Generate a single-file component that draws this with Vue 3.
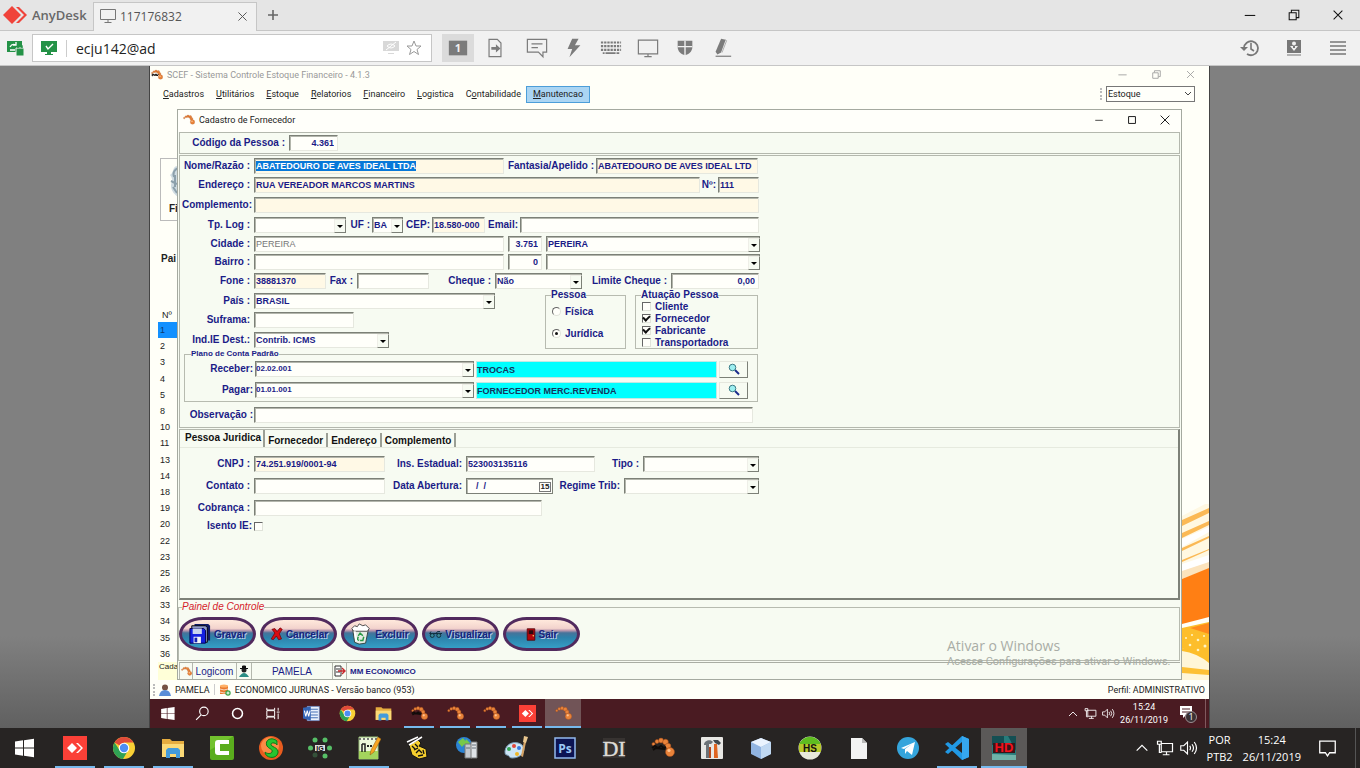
<script setup>
import { onMounted } from 'vue'

onMounted(() => {
  const el = document.getElementById('nome')
  if (el) {
    el.focus()
    el.select()
  }
})

const toolIcons = [
  { name: 'Monitor 1', cls: 'on', svg: '<rect x="2" y="4" width="20" height="16" fill="#7b7b7b"/><text x="12" y="16.500" font-size="12" font-weight="bold" text-anchor="middle" fill="#f0f0f0" font-family="Open Sans">1</text>' },
  { name: 'Transferir arquivo', cls: 't2', svg: '<path d="M5.500 2.500h9l4 4v15h-13z" fill="none" stroke="#7b7b7b" stroke-width="1.300"/><path d="M8 11h5V8l5 4.500-5 4.500v-3H8z" fill="#7b7b7b"/>' },
  { name: 'Chat', cls: 't3', svg: '<path d="M1.500 2.500h21v14h-4v5l-5-5h-12z" fill="none" stroke="#7b7b7b" stroke-width="1.300"/><path d="M6 7.500h12M6 11.500h7" stroke="#7b7b7b" stroke-width="1.400"/>' },
  { name: 'Ações', cls: 't4', svg: '<path d="M10 2h7l-4 7h6L7 22l3-9H5z" fill="#7b7b7b"/>' },
  { name: 'Teclado', cls: 't5', svg: '<path d="M1 6h22M1 10h22M1 14h22" stroke="#7b7b7b" stroke-width="2.400" stroke-dasharray="2.500 1"/><path d="M3 17.500h2M6 17.500h11M18 17.500h3" stroke="#7b7b7b" stroke-width="2"/>' },
  { name: 'Tela', cls: 't6', svg: '<path d="M1.500 3.500h21v15h-21zM12 19v3M8 21.500h8" fill="none" stroke="#7b7b7b" stroke-width="1.300"/>' },
  { name: 'Permissões', cls: 't7', svg: '<path d="M4 4h16v7c0 5-4 8-8 9-4-1-8-4-8-9z" fill="#7b7b7b"/><path d="M12 4v17M4 10.500h16" stroke="#f1f1f1" stroke-width="1.500"/>' },
  { name: 'Desenhar', cls: 't8', svg: '<path d="M11 2l5 1-5 14-4 2-2-3z" fill="#7b7b7b"/><path d="M15 3l2 1-5 13" stroke="#aaa" fill="none"/><path d="M5 21h17" stroke="#7b7b7b" stroke-width="1.300"/>' },
]

const menus = [
  ['', 'C', 'adastros'], ['', 'U', 'tilitários'], ['', 'E', 'stoque'], ['', 'R', 'elatorios'],
  ['', 'F', 'inanceiro'], ['', 'L', 'ogistica'], ['C', 'o', 'ntabilidade'], ['', 'M', 'anutencao'],
]

const numbers = [1, 2, 3, 4, 5, 8, 10, 11, 13, 14, 18, 19, 20, 22, 23, 25, 26, 33, 34, 35, 36]

const f = (id, label, value = '', cls = '') => ({ id, label, value, cls, kind: 'input' })
const s = (id, label, value = '', cls = '') => ({ id, label, value, cls, kind: 'select' })

const topRows = [
  { cls: 'r-nome', cells: [f('nome', 'Nome/Razão :', 'ABATEDOURO DE AVES IDEAL LTDA', 'cream'), f('fantasia', 'Fantasia/Apelido :', 'ABATEDOURO DE AVES IDEAL LTD', 'cream')] },
  { cls: 'r-endereco', cells: [f('endereco', 'Endereço :', 'RUA VEREADOR MARCOS MARTINS', 'cream'), f('numero', 'Nº:', '111', 'cream')] },
  { cls: 'r-complemento', cells: [f('complemento', 'Complemento:', '', 'cream')] },
  { cls: 'r-log', cells: [s('log', 'Tp. Log :'), s('uf', 'UF :', 'BA'), f('cep', 'CEP:', '18.580-000', 'cream'), f('email', 'Email:')] },
  { cls: 'r-cidade', cells: [f('cidade', 'Cidade :', 'PEREIRA', 'dim'), f('cidadecod', '', '3.751', 'num'), s('cidadesel', '', 'PEREIRA')] },
  { cls: 'r-cidade', cells: [f('bairro', 'Bairro :'), f('bairrocod', '', '0', 'num'), s('bairrosel', '')] },
  { cls: 'r-fone', cells: [f('fone', 'Fone :', '38881370', 'cream'), f('fax', 'Fax :'), s('cheque', 'Cheque :', 'Não'), f('limite', 'Limite Cheque :', '0,00', 'num')] },
]
const midRows = [
  { cls: 'r-pais', cells: [s('pais', 'País :', 'BRASIL')] },
  { cls: 'r-suframa', cells: [f('suframa', 'Suframa:')] },
  { cls: 'r-ind', cells: [s('indie', 'Ind.IE Dest.:', 'Contrib. ICMS')] },
]
const tabRows = [
  { cls: 'r-cnpj', cells: [f('cnpj', 'CNPJ :', '74.251.919/0001-94', 'cream'), f('ie', 'Ins. Estadual:', '523003135116'), s('tipo', 'Tipo :')] },
  { cls: 'r-contato', cells: [f('contato', 'Contato :'), { id: 'abertura', label: 'Data Abertura:', value: '  /  /', kind: 'date', cls: '' }, s('regime', 'Regime Trib:')] },
  { cls: 'r-cobranca', cells: [f('cobranca', 'Cobrança :')] },
]
const plano = [
  { id: 'receber', label: 'Receber:', code: '02.02.001', name: 'TROCAS' },
  { id: 'pagar', label: 'Pagar:', code: '01.01.001', name: 'FORNECEDOR MERC.REVENDA' },
]
const atuacao = [
  ['Cliente', false], ['Fornecedor', true], ['Fabricante', true], ['Transportadora', false],
]
const tabs = ['Pessoa Juridica', 'Fornecedor', 'Endereço', 'Complemento']

const actions = [
  { name: 'Gravar', w: 22, h: 22, box: '0 0 24 24', svg: '<path d="M6 1h15l2 2v16H6z" fill="#111a66"/><path d="M3 3h15l2 2v16H3z" fill="#8f9ac9" stroke="#000"/><path d="M1 6h15l2 2v14H1z" fill="#1420e0" stroke="#00004d"/><path d="M4 6h10v6H4z" fill="#c8d4ee"/><path d="M5 15h8v7H5z" fill="#f4f6fa"/><path d="M6 16h3v5H6z" fill="#1420b0"/>' },
  { name: 'Cancelar', w: 14, h: 15, box: '2 3 19 20', svg: '<path d="M6 6l4-1 3 4 4-5 3 2-4 6 3 7-4 1-3-5-4 5-3-1 5-8z" fill="#d90d12" stroke="#6d0208"/>' },
  { name: 'Excluir', w: 22, h: 22, box: '0 0 24 24', svg: '<path d="M3 7h17l-3 15-7 1-5-2z" fill="#e5ebe4" stroke="#30403a"/><path d="M2 6l3-3 3 1 2-3 4 2 3-1 4 4-2 3H4z" fill="#fff" stroke="#444"/><path d="M9 14l2-3 3 3M15 15l-1 4h-3M9 15l-1 3 2 1" fill="none" stroke="#269a44" stroke-width="1.600"/><path d="M5 9l2 11" stroke="#fff" stroke-width="2"/>' },
  { name: 'Visualizar', w: 13, h: 9, box: '2 7 20 13', svg: '<path d="M3 12h19M3 12l2-3M13 12l2-3h4" stroke="#0e2c3c" stroke-width="1.500" fill="none"/><circle cx="7" cy="15" r="3" fill="#3d8a98" stroke="#0e2c3c" stroke-width="1.500"/><circle cx="17" cy="15" r="3" fill="#3d8a98" stroke="#0e2c3c" stroke-width="1.500"/>' },
  { name: 'Sair', w: 10, h: 13, box: '7 4 12 17', svg: '<path d="M8 5h10v15H8z" fill="#b3070d" stroke="#4d0008"/><path d="M10 7h6v5h-6z" fill="#2d0a10"/><circle cx="16" cy="14" r="1" fill="#ffe060"/>' },
]

const flag = '<path d="M3 5.500l8-1.200v7.200H3zM12 4.200l10-1.400v8.700H12zM3 12.500h8v7.200l-8-1.200zM12 12.500h10v8.700l-10-1.400z" fill="#fff"/>'
const chrome = '<circle cx="12" cy="12" r="11" fill="#f9d035"/><path d="M12 12L2.500 6.500A11 11 0 0 1 21.500 6.500H12z" fill="#df4a3a"/><path d="M2.500 6.500A11 11 0 0 0 11 23l5-8.500-4-2.500-4.500 2z" fill="#2fa254"/><circle cx="12" cy="12" r="5.300" fill="#fff"/><circle cx="12" cy="12" r="4.200" fill="#4d8df4"/>'
const folder = '<path d="M1 3h8l2 2h12v16H1z" fill="#e5ac3f"/><path d="M1 8h22v13H1z" fill="#fbd976"/><path d="M5 22v-8l2-2h10l2 2v8h-4v-4H9v4z" fill="#439bdb"/>'
const anydesk = '<path d="M0 0h24v24H0z" fill="#fb4037"/><path d="M9 7l5 5-5 5-5-5zM13 7h2l5 5-5 5h-2l5-5z" fill="#fff"/>'
const worm = '<g fill="#e9833a" stroke="#a44b18" stroke-width=".5"><circle cx="2.500" cy="8" r="1.600"/><circle cx="6" cy="5.500" r="2"/><circle cx="10" cy="4.500" r="2.400"/><circle cx="14.500" cy="6" r="2.800"/><circle cx="17" cy="10" r="2.800"/><circle cx="19" cy="16" r="4.500"/></g><circle cx="18" cy="14.500" r="1.600" fill="#ffc491"/>'
const antworm = worm + '<path d="M1 12l3-2 3 2 3-2 3 2 2-1M2 14l3-2 9 1" stroke="#100c0a" stroke-width="2" fill="none"/>'

const apps = [
  { name: 'Iniciar', cls: 'start', svg: flag },
  { name: 'AnyDesk', cls: 'run', svg: anydesk },
  { name: 'Chrome', cls: 'run', svg: chrome },
  { name: 'Explorador de Arquivos', cls: 'run', svg: folder },
  { name: 'Camtasia', svg: '<rect width="24" height="24" rx="2" fill="#5aad1d"/><path d="M0 0h24L0 14z" fill="#72c22e"/><path d="M19 4H8Q5 4 5 7v9q0 3 3 3h11v-4H10V8h9z" fill="#fff"/>' },
  { name: 'Sistema', svg: '<circle cx="12" cy="12" r="12" fill="#e85c1e"/><circle cx="11" cy="10" r="9" fill="#fb8b45"/><path d="M18 5c-5-5-13-1-10 5 2 3 6 3 5 6-1 2-5 2-7 0 0 6 11 8 13 1 1-6-8-6-7-9 1-2 5-1 6 1z" fill="#27c52f" stroke="#0c7718"/>' },
  { name: 'Rede', svg: '<path d="M7 12h10" stroke="#ddd" stroke-width="6"/><text x="12" y="14.500" text-anchor="middle" font-size="7" font-weight="bold" font-family="Liberation Sans" fill="#111">IG</text><g fill="#56bf67"><circle cx="7" cy="4" r="2.500"/><circle cx="17" cy="4" r="2.500"/><circle cx="2.500" cy="12" r="2.500"/><circle cx="21.500" cy="12" r="2.500"/><circle cx="7" cy="19" r="2.500" fill="#35513a"/><circle cx="17" cy="20" r="2.500"/></g>' },
  { name: 'Notepad++', cls: 'run', svg: '<path d="M2 1h19v22H2z" fill="#edf8dc" stroke="#98bd79"/><path d="M2 15h19v8H2z" fill="#a3d45d"/><path d="M2 3h19" stroke="#777" stroke-width="2" stroke-dasharray="2 2"/><path d="M5 8h3v8M5 8v8" stroke="#222" stroke-width="1.500" fill="none"/><path d="M10 10h2M13 10h2" stroke="#222" stroke-width="2"/><path d="M21 1l3 2-7 13-4 3 1-5z" fill="#f8a521" stroke="#8b5813" stroke-width=".5"/>' },
  { name: 'Ferramenta', svg: '<path d="M3 9l9-5 3 3-2 3 7 3 1 8-8 2-7-4z" fill="#f6cf2e" stroke="#111"/><path d="M1 6l11-5M3 9l13-8" stroke="#fff" stroke-width="1.500"/><path d="M6 10l3 3M9 8l3 3M8 14l4-2M10 17l3-3 3 3M12 20l5-1M17 14l1 4" stroke="#111" stroke-width="1.300" fill="none"/>' },
  { name: 'Servidor', svg: '<circle cx="9" cy="9" r="8" fill="#2b83d4"/><path d="M3 6l5-4 3 4-4 5zM11 3l4 4-2 5-4-3z" fill="#77c949"/><path d="M10 8h7v14h-7z" fill="#c4c9cf" stroke="#777"/><path d="M16 6h6v16h-6z" fill="#dfe3e7" stroke="#777"/><path d="M17 9h4M17 12h4M11 12h4" stroke="#66717a"/>' },
  { name: 'Paint', svg: '<path d="M1 15C2 7 12 4 18 9c5 6-1 13-10 13-3 0-3-3-5-3-2 0-2-2-2-4z" fill="#cde5f5" stroke="#7a9eb8"/><circle cx="5" cy="13" r="2" fill="#32a452"/><circle cx="10" cy="10" r="2" fill="#df473b"/><circle cx="15" cy="12" r="2" fill="#3679dc"/><circle cx="13" cy="18" r="2" fill="#efb727"/><path d="M20 5l2 1-3 15-2-1z" fill="#d6a467"/><path d="M20 0l4 1-2 6-3-1z" fill="#e8c68e"/>' },
  { name: 'Photoshop', svg: '<rect x="2" y="2" width="20" height="20" fill="#0c1453" stroke="#92b9ee" stroke-width="1.500"/><text x="12" y="16.500" text-anchor="middle" font-size="12" font-weight="bold" font-family="Open Sans" fill="#9cc8f7">Ps</text>' },
  { name: 'DI', svg: '<path d="M1 2h22v20H1z" fill="#373331"/><text x="12" y="20" text-anchor="middle" font-size="22" font-family="Liberation Serif" fill="#dedcd8" stroke="#dedcd8" stroke-width=".4">DI</text>' },
  { name: 'Logicom', svg: antworm },
  { name: 'Utilitários', svg: '<rect x="1" y="1" width="22" height="22" rx="1" fill="#e8e7e4"/><path d="M4 9c0-5 7-6 9-3l-2 2H9v14H6V9z" fill="#6c7277"/><path d="M13 4h5l3 3-2 2-4-2z" fill="#40484d"/><path d="M14 8h3l1 14h-4z" fill="#df6420"/><path d="M9 11h2v11H9z" fill="#b6481d"/>' },
  { name: 'VirtualBox', svg: '<path d="M12 2l10 4v12l-10 5L2 18V6z" fill="#91b4e1"/><path d="M12 2l10 4-10 5L2 6z" fill="#eaf3fe"/><path d="M12 11l10-5v12l-10 5z" fill="#c0d8f2"/>' },
  { name: 'HeidiSQL', svg: '<circle cx="12" cy="12" r="11.500" fill="#e8e9dc"/><path d="M1 9a11.500 11.500 0 0 1 22 0z" fill="#5fbd20"/><path d="M1 8h22v8H1z" fill="#b7c92c"/><text x="12" y="16" text-anchor="middle" font-size="10" font-weight="bold" font-family="Liberation Sans" fill="#111">HS</text>' },
  { name: 'Documento', svg: '<path d="M4 2h11l5 5v16H4z" fill="#f3f3f3"/><path d="M15 2l5 5h-5z" fill="#b9b9b9"/>' },
  { name: 'Telegram', svg: '<circle cx="12" cy="12" r="11" fill="#35a5dc"/><path d="M5 12l14-6-3 13-5-4-2 3v-5l7-5-8 5z" fill="#fff"/>' },
  { name: 'VS Code', cls: 'run', svg: '<path d="M17 0l7 3v18l-7 3L0 8l3-2 14 11V6L3 18l-3-2z" fill="#2199e5"/><path d="M17 0l7 3v18l-7 3z" fill="#36a8f0"/>' },
  { name: 'HD', cls: 'run current', svg: '<path d="M0 0h24v24H0z" fill="#277b7a"/><path d="M0 0h12v9H0zM16 0h8v15z" fill="#144f53"/><path d="M0 24V18l24 1v5z" fill="#6fb3a9"/><path d="M1 7h22v10H1z" fill="#3b1418"/><text x="12" y="16" text-anchor="middle" font-size="13" font-weight="bold" font-family="Liberation Sans" fill="#f3121c">HD</text>' },
]

const remoteApps = [
  { name: 'Iniciar', svg: flag },
  { name: 'Pesquisar', svg: '<circle cx="14" cy="9" r="6" fill="none" stroke="#fff" stroke-width="1.600"/><path d="M10 14l-7 7" stroke="#fff" stroke-width="1.600"/>' },
  { name: 'Cortana', svg: '<circle cx="12" cy="12" r="7" fill="none" stroke="#fff" stroke-width="2.200"/>' },
  { name: 'Visão de tarefas', svg: '<path d="M4 4v3h11V4M4 20v-3h11v3M4 8h11v8H4zM20 4v4M20 12v8M18 10h4" fill="none" stroke="#fff" stroke-width="1.400"/>' },
  { name: 'Word', cls: 'word', svg: '<path d="M6 2h17v20H6z" fill="#e9f1fd" stroke="#6b8fce"/><path d="M10 6h11M10 10h11M10 14h11M10 18h11" stroke="#4670b5" stroke-width="1.500"/><path d="M0 4l11-2v20L0 19z" fill="#3565b6"/><path d="M2 8l2 8 2-8 2 8 2-8" stroke="#fff" stroke-width="1.500" fill="none"/>' },
  { name: 'Chrome', svg: chrome },
  { name: 'Explorador', svg: folder },
  { name: 'SCEF', cls: 'run', svg: antworm },
  { name: 'SCEF 2', cls: 'run', svg: worm },
  { name: 'SCEF 3', cls: 'run', svg: worm },
  { name: 'AnyDesk', cls: 'run', svg: anydesk },
  { name: 'SCEF 4', cls: 'run current', svg: worm },
]

const netIcon = '<path d="M7 6h15v11H7zM14 17v4M9 21h9M2 3h5v4H2zM4.500 7v11h3" fill="none" stroke="#fff" stroke-width="1.600"/>'
const volIcon = '<path d="M1 9h4l5-5v16l-5-5H1z" fill="none" stroke="#fff" stroke-width="1.500"/><path d="M13 9q2 3 0 6M16 7q4 5 0 10M19 4q6 8 0 16" fill="none" stroke="#fff" stroke-width="1.600"/>'
const upIcon = '<path d="M4 16l8-8 8 8" fill="none" stroke="#fff" stroke-width="1.800"/>'
const minIcon = '<path d="M2 8.500h12" stroke="currentColor" stroke-width="1.200"/>'
const maxIcon = '<path d="M2.500 2.500h11v11h-11z" fill="none" stroke="currentColor" stroke-width="1.500"/>'
const restIcon = '<path d="M2.500 5.500h8v8h-8zM5 5V2.500h8.500V11H11" fill="none" stroke="currentColor" stroke-width="1.200"/>'
const closeIcon = '<path d="M3 3l10 10M13 3L3 13" stroke="currentColor" stroke-width="1.200"/>'
const closeBig = '<path d="M1 1l14 14M15 1L1 15" stroke="currentColor" stroke-width="1.500"/>'
const controls = [['Minimizar', minIcon], ['Restaurar', restIcon], ['Fechar', closeIcon]]
const controls2 = [['Minimizar', minIcon], ['Maximizar', maxIcon], ['Fechar', closeBig]]
</script>

<template>
  <div class="page">
    <header class="tabbar">
      <div class="brand">
        <svg viewBox="0 0 24 18" width="24" height="18"><path d="M9 0l9 9-9 9-9-9z" fill="#f0433a" /><path d="M13 1h3l8 8-8 8h-3l8-8z" fill="#f0433a" /></svg>
        <span>AnyDesk</span>
      </div>
      <div class="session">
        <svg viewBox="0 0 16 14" width="16" height="14"><path d="M.5 .5h15v10H.5zM8 11v2M4.500 13.500h7" fill="none" stroke="#777" /></svg>
        <span>117176832</span>
        <button aria-label="Fechar aba"><svg viewBox="0 0 16 16" width="13" height="13" v-html="closeIcon"></svg></button>
      </div>
      <button class="plus" aria-label="Nova aba"><svg viewBox="0 0 12 12" width="12" height="12"><path d="M6 1v10M1 6h10" stroke="#666" stroke-width="1.600" /></svg></button>
      <div class="winctl outer">
        <button v-for="c in controls" :key="c[0]" :aria-label="c[0]"><svg viewBox="0 0 16 16" width="14" height="14" v-html="c[1]"></svg></button>
      </div>
    </header>

    <div class="toolbar">
      <svg class="lock" viewBox="0 0 18 16" width="18" height="16"><path d="M0 1h15v11H0z" fill="#249247" /><path d="M3 7q2-4 6-2M9 2v3H6M3 10h5" stroke="#fff" fill="none" stroke-width="1.300" /><path d="M9 8h8v8H9z" fill="#249247" stroke="#f1f1f1" /><path d="M11 8V6q2-3 4 0v2" fill="none" stroke="#249247" stroke-width="1.500" /></svg>
      <div class="address">
        <svg viewBox="0 0 16 15" width="16" height="15"><path d="M0 0h16v11H0zM6 11h4v2h2v1H4v-1h2z" fill="#249247" /><path d="M5 5l2 3 5-5" fill="none" stroke="#fff" stroke-width="1.400" /></svg>
        <input type="text" value="ecju142@ad" aria-label="Endereço remoto" />
        <svg viewBox="0 0 16 14" width="16" height="14"><path d="M0 0h16v10H0zM5 12h6v1H5z" fill="#d8d8d8" /><path d="M3 9L13 1M4 5q4-4 8 0-4 4-8 0" stroke="#fff" fill="none" /></svg>
        <svg viewBox="0 0 16 16" width="16" height="16"><path d="M8 1l2 5h5l-4 3.500 1.500 5L8 11.500l-4.500 3 1.500-5L1 6h5z" fill="none" stroke="#999" /></svg>
      </div>
      <div class="tools">
        <button v-for="t in toolIcons" :key="t.name" :class="t.cls" :aria-label="t.name"><svg viewBox="0 0 24 24" width="22" height="22" v-html="t.svg"></svg></button>
      </div>
      <div class="tools right">
        <button aria-label="Histórico"><svg viewBox="0 0 20 18" width="20" height="18"><path d="M4 9a7 7 0 1 1 3 6" fill="none" stroke="#777" stroke-width="1.800" /><path d="M0 8h8l-4 4z" fill="#777" /><path d="M11 4v6l3 2" fill="none" stroke="#777" stroke-width="1.600" /></svg></button>
        <button aria-label="Instalar"><svg viewBox="0 0 16 18" width="16" height="18"><path d="M1 1h14v13H1zM1 15.500h14v1H1z" fill="#777" /><circle cx="8" cy="4.500" r="2" fill="#f1f1f1" /><path d="M4 7h3v2h2V7h3l-4 5z" fill="#f1f1f1" /></svg></button>
        <button aria-label="Menu"><svg viewBox="0 0 16 16" width="16" height="16"><path d="M0 2h16M0 6h16M0 10h16M0 14h16" stroke="#777" stroke-width="1.700" /></svg></button>
      </div>
    </div>

    <main class="stage">
      <div class="remote">
        <div class="apptitle">
          <svg viewBox="0 0 24 24" width="12" height="12" v-html="antworm"></svg>
          <span>SCEF - Sistema Controle Estoque Financeiro - 4.1.3</span>
          <div class="winctl small">
            <button v-for="c in controls" :key="c[0]" :aria-label="c[0]"><svg viewBox="0 0 16 16" width="11" height="11" v-html="c[1]"></svg></button>
          </div>
        </div>
        <nav class="menu">
          <button v-for="(m, i) in menus" :key="i" :class="{ active: i === 7 }">{{ m[0] }}<u>{{ m[1] }}</u>{{ m[2] }}</button>
          <i class="grip"></i>
          <span class="module">
            <select aria-label="Módulo"><option>Estoque</option></select>
            <svg viewBox="0 0 8 6" width="8" height="6"><path d="M1 1l3 3 3-3" fill="none" stroke="#444" /></svg>
          </span>
        </nav>

        <div class="workspace">
          <aside class="behind">
            <div class="tile">
              <svg viewBox="0 0 10 34" width="8" height="34" preserveAspectRatio="xMinYMid slice"><path d="M8 1C3 2 5 8 1 10q3 3 2 7c-3 5 1 12 6 15h10V1z" fill="#cfdbe1" /><path d="M9 3q-6 3-4 9M2 16l6 3M4 22l4 6M6 10v12" stroke="#8ca0ab" fill="none" stroke-width="2" /></svg>
              <b>Fi</b>
            </div>
            <b class="pai">Pai</b>
            <span class="nhead">Nº</span>
            <ul>
              <li v-for="n in numbers" :key="n" :class="{ sel: n === 1 }">{{ n }}</li>
            </ul>
            <span class="cad">Cada</span>
          </aside>
          <svg class="art" viewBox="0 0 27 176" width="27" height="176">
            <path d="M0 12L27-2v92L0 74z" fill="#fff8e2" />
            <path d="M0 16L27 4v5L0 22zM0 29l27-12v4L0 34zM0 44l27-12v2L0 47zM0 56l27-11v1L0 58z" fill="#fbb955" />
            <path d="M0 35l27-12v5L0 43zM0 60l27-9v11L0 72z" fill="#fff" />
            <path d="M0 67l27-9v7L0 75z" fill="#fbe3bd" />
            <path d="M0 75l27-11v49L0 120z" fill="#ff7f14" />
            <path d="M0 124l27-6v40L0 166z" fill="#fdbe2b" />
            <path d="M8 124l19-5v11z" fill="#ff8a1c" />
            <g fill="#fff4c4"><circle cx="4" cy="134" r="1" /><circle cx="10" cy="131" r="1" /><circle cx="16" cy="136" r="1.300" /><circle cx="22" cy="132" r="1" /><circle cx="8" cy="141" r="1.300" /><circle cx="23" cy="142" r="1.500" /><circle cx="16" cy="146" r="1.300" /></g>
            <path d="M0 144l27 12v20H0z" fill="#fff6d8" /><path d="M0 163l27 3v5L0 169z" fill="#fdc035" /><path d="M0 147q15 2 27 12v-4Q15 147 0 144z" fill="#fdbe2b" />
          </svg>

          <section class="window">
            <div class="wtitle">
              <svg viewBox="0 0 24 24" width="12" height="12" v-html="worm"></svg>
              <span>Cadastro de Fornecedor</span>
              <div class="winctl child">
                <button v-for="c in controls2" :key="c[0]" :aria-label="c[0]"><svg viewBox="0 0 16 16" width="10" height="10" v-html="c[1]"></svg></button>
              </div>
            </div>

            <div class="panel code">
              <div class="row r-codigo">
                <label for="codigo">Código da Pessoa :</label>
                <input id="codigo" class="num" value="4.361" />
              </div>
            </div>

            <div class="panel form">
              <div class="toprows">
                <div v-for="(r, ri) in topRows" :key="ri" class="row" :class="r.cls">
                  <template v-for="c in r.cells" :key="c.id">
                    <label v-if="c.label" :for="c.id">{{ c.label }}</label>
                    <input v-if="c.kind === 'input'" :id="c.id" :class="c.cls" :value="c.value" :aria-label="c.label || c.id" />
                    <span v-else class="combo"><select :id="c.id" :aria-label="c.label || c.id"><option>{{ c.value }}</option></select><i></i></span>
                  </template>
                </div>
              </div>

              <div class="middle">
                <div class="midrows">
                  <div v-for="(r, ri) in midRows" :key="ri" class="row" :class="r.cls">
                    <template v-for="c in r.cells" :key="c.id">
                      <label :for="c.id">{{ c.label }}</label>
                      <input v-if="c.kind === 'input'" :id="c.id" />
                      <span v-else class="combo"><select :id="c.id"><option>{{ c.value }}</option></select><i></i></span>
                    </template>
                  </div>
                </div>
                <fieldset class="pessoa">
                  <legend>Pessoa</legend>
                  <label><input type="radio" name="pessoa" />Física</label>
                  <label><input type="radio" name="pessoa" checked />Jurídica</label>
                </fieldset>
                <fieldset class="atuacao">
                  <legend>Atuação Pessoa</legend>
                  <label v-for="a in atuacao" :key="a[0]"><input type="checkbox" :checked="a[1]" />{{ a[0] }}</label>
                </fieldset>
              </div>

              <fieldset class="plano">
                <legend>Plano de Conta Padrão</legend>
                <div v-for="p in plano" :key="p.id" class="row r-plano">
                  <label :for="p.id">{{ p.label }}</label>
                  <span class="combo mini"><select :id="p.id"><option>{{ p.code }}</option></select><i></i></span>
                  <output :for="p.id">{{ p.name }}</output>
                  <button :aria-label="'Procurar ' + p.label"><svg viewBox="0 0 12 12" width="12" height="12"><path d="M7 7l4 4" stroke="#1b2b8c" stroke-width="2" /><circle cx="4.500" cy="4.500" r="3.300" fill="#9ceff0" stroke="#3c7a86" /></svg></button>
                </div>
              </fieldset>

              <div class="row r-obs">
                <label for="obs">Observação :</label>
                <input id="obs" />
              </div>
            </div>

            <div class="panel detail">
              <div class="tabs" role="tablist">
                <button v-for="(t, i) in tabs" :key="t" role="tab" :aria-selected="i === 0" :class="{ active: i === 0 }">{{ t }}</button>
              </div>
              <div class="tabpage">
                <div v-for="(r, ri) in tabRows" :key="ri" class="row" :class="r.cls">
                  <template v-for="c in r.cells" :key="c.id">
                    <label :for="c.id">{{ c.label }}</label>
                    <input v-if="c.kind === 'input'" :id="c.id" :class="c.cls" :value="c.value" />
                    <span v-else-if="c.kind === 'date'" class="date"><input :id="c.id" :value="c.value" /><button aria-label="Calendário">15</button></span>
                    <span v-else class="combo"><select :id="c.id"><option>{{ c.value }}</option></select><i></i></span>
                  </template>
                </div>
                <div class="row r-isento">
                  <label for="isento">Isento IE:</label>
                  <input id="isento" type="checkbox" />
                </div>
              </div>
            </div>

            <fieldset class="control">
              <legend>Painel de Controle</legend>
              <button v-for="a in actions" :key="a.name"><svg :viewBox="a.box" :width="a.w" :height="a.h" v-html="a.svg"></svg>{{ a.name }}</button>
            </fieldset>

            <footer class="wstatus">
              <span class="ico"><svg viewBox="0 0 24 24" width="11" height="11" v-html="worm"></svg></span>
              <span class="logi">Logicom</span>
              <span class="ico2"><svg viewBox="0 0 12 12" width="12" height="12"><path d="M1 12q5-8 10 0z" fill="#2a8d84" /><circle cx="6" cy="5" r="2.500" fill="#222" /><path d="M2 3.500h8M4.500 1h3v2h-3z" stroke="#111" fill="#111" /></svg></span>
              <span class="user">PAMELA</span>
              <span class="ico3"><svg viewBox="0 0 12 12" width="12" height="12"><path d="M1 1h6v10H1zM2 4h4M2 7h4" fill="#fff" stroke="#333" /><path d="M4 6h7M8 3l3 3-3 3" stroke="#c7282c" stroke-width="1.400" fill="none" /></svg></span>
              <b>MM ECONOMICO</b>
            </footer>

            <div class="activate"><p>Ativar o Windows</p><small>Acesse Configurações para ativar o Windows.</small></div>
          </section>
        </div>

        <div class="appstatus">
          <i class="grip"></i>
          <svg viewBox="0 0 12 12" width="12" height="12"><circle cx="6" cy="3.500" r="3" fill="#765244" /><path d="M0 12q1-6 6-6t6 6z" fill="#5a8ed8" /></svg>
          <span>PAMELA</span>
          <i class="sep"></i>
          <svg viewBox="0 0 12 12" width="12" height="12"><path d="M1 2h8v8H1z" fill="#ea7a2c" /><ellipse cx="5" cy="2" rx="4" ry="1.500" fill="#ffb066" /><path d="M1 5q4 2 8 0M1 8q4 2 8 0" stroke="#fff" fill="none" stroke-width=".7" /><circle cx="9" cy="9" r="2.700" fill="#3aa547" /><path d="M9 7.500v3M7.500 9h3" stroke="#fff" /></svg>
          <span>ECONOMICO JURUNAS - Versão banco (953)</span>
          <span class="perfil">Perfil: ADMINISTRATIVO</span>
        </div>

        <div class="rtask">
          <button v-for="a in remoteApps" :key="a.name" :class="a.cls" :aria-label="a.name"><svg viewBox="0 0 24 24" width="17" height="17" v-html="a.svg"></svg></button>
          <div class="rtray">
            <svg viewBox="0 0 24 24" width="12" height="12" v-html="upIcon"></svg>
            <svg viewBox="0 0 24 24" width="13" height="13" v-html="netIcon"></svg>
            <svg viewBox="0 0 24 24" width="13" height="13" v-html="volIcon"></svg>
            <div class="clock"><span>15:24</span><span>26/11/2019</span></div>
            <svg class="note" viewBox="0 0 18 18" width="18" height="18"><path d="M1 1h12v9H7l-3 3v-3H1z" fill="#fff" /><path d="M3 4h8M3 7h8" stroke="#4a1b22" /><circle cx="12" cy="12" r="5.500" fill="#3a3135" stroke="#9b8f92" /><text x="12" y="15" font-size="9" text-anchor="middle" fill="#fff" font-family="Open Sans">1</text></svg>
          </div>
        </div>
      </div>
    </main>

    <footer class="task">
      <button v-for="a in apps" :key="a.name" :class="a.cls" :aria-label="a.name"><svg viewBox="0 0 24 24" width="24" height="24" v-html="a.svg"></svg></button>
      <div class="tray">
        <svg viewBox="0 0 24 24" width="16" height="16" v-html="upIcon"></svg>
        <svg viewBox="0 0 24 24" width="18" height="18" v-html="netIcon"></svg>
        <svg viewBox="0 0 24 24" width="18" height="18" v-html="volIcon"></svg>
        <div class="lang"><span>POR</span><span>PTB2</span></div>
        <div class="clock"><span>15:24</span><span>26/11/2019</span></div>
        <svg class="bell" viewBox="0 0 16 16" width="17" height="17"><path d="M.7 1h14.600v11H10l-2 3-2-3H.7z" fill="none" stroke="#fff" stroke-width="1.200" /></svg>
      </div>
    </footer>
  </div>
</template>

<style>
body { margin: 0; }
</style>

<style scoped>
* { box-sizing: border-box; }
.page { min-height: 100vh; display: flex; flex-direction: column; font-family: "Open Sans", "Noto Sans", sans-serif; background: #808080; overflow: hidden; }
button { border: 0; background: none; padding: 0; margin: 0; font: inherit; color: inherit; display: flex; align-items: center; justify-content: center; }
input, select { font: inherit; color: inherit; margin: 0; border-radius: 0; min-width: 0; }
svg { flex: none; display: block; }
fieldset { margin: 0; padding: 0; border: 1px solid #b7bbb0; min-width: 0; }

.tabbar { height: 31px; background: #e5e5e5; border-bottom: 1px solid #c6c6c6; display: flex; align-items: stretch; }
.brand { width: 93px; padding-left: 3px; display: flex; align-items: center; gap: 5px; font-size: 13px; font-weight: 600; color: #686868; }
.session { width: 164px; margin: 2px 0 -1px; padding: 0 7px 2px 6px; background: #f1f1f1; border: 1px solid #c6c6c6; border-bottom: 0; display: flex; align-items: center; gap: 4px; font-size: 12px; color: #555; }
.session button { margin-left: auto; }
.plus { width: 32px; }
.winctl { margin-left: auto; display: flex; align-items: center; color: #111; }
.outer button { width: 44px; height: 30px; }

.toolbar { height: 35px; background: #f1f1f1; border-bottom: 1px solid #c6c6c6; display: flex; align-items: center; }
.lock { margin: 0 7px; }
.address { width: 400px; height: 28px; background: #fff; border: 1px solid #c6c6c6; display: flex; align-items: center; gap: 7px; padding: 0 9px 0 8px; }
.address input { flex: 1; border: 0; border-left: 1px solid #ccc; padding: 0 0 0 9px; margin-left: 2px; height: 17px; font-size: 14px; color: #222; outline: 0; }
.tools { display: flex; align-items: center; height: 34px; margin-left: 10px; }
.tools button { width: 42px; height: 28px; }
.tools .on, .tools .t4, .tools .t6, .tools .t8 { width: 32px; }
.tools .on { background: #dbdbdb; }
.tools.right { margin-left: auto; }
.tools.right button { width: 44px; }

.stage { flex: 1; display: flex; padding: 0 151px 0 150px; background: linear-gradient(#808080 0, #808080 570px, #606060 100%); }
.remote { flex: 1; min-width: 0; display: flex; flex-direction: column; background: #fffff8; color: #222; font-family: Roboto, "Noto Sans", sans-serif; font-size: 9px; box-shadow: 0 0 0 1px #444; clip-path: inset(0 -1px 0 -1px); }
.apptitle { height: 17px; display: flex; align-items: center; gap: 4px; padding-left: 1px; color: #999; }
.small { color: #999; height: 15px; padding-right: 2px; }
.small button { width: 34px; }
.menu { height: 22px; display: flex; align-items: center; padding: 0 14px 0 7px; color: #222; }
.menu button { height: 15px; padding: 0 6px; white-space: pre; }
.menu .active { background: #abd5f3; outline: 1px solid #4c9ed9; }
.grip { width: 2px; height: 12px; border-left: 2px dotted #bbb; }
.menu .grip { margin-left: auto; margin-right: 4px; }
.module { display: grid; align-items: center; width: 89px; height: 16px; }
.module select { grid-area: 1 / 1; appearance: none; border: 1px solid #777; background: #fffffa; height: 16px; padding: 0 1px; }
.module svg { grid-area: 1 / 1; justify-self: end; margin-right: 3px; pointer-events: none; }

.workspace { flex: 1; position: relative; display: flex; justify-content: space-between; }
.behind { width: 27px; padding: 53px 0 0 8px; display: flex; flex-direction: column; font-family: "Liberation Sans", Arial, sans-serif; }
.tile { height: 63px; flex: none; margin-left: 2px; border: 1px solid #bbb; border-right: 0; padding: 6px 0 0 8px; font-size: 10px; }
.tile b { display: block; margin-top: 4px; }
.pai { height: 12px; line-height: 12px; margin: 32px 0 0 3px; font-size: 10px; }
.nhead { height: 12px; line-height: 12px; margin: 44px 0 1px 4px; }
.behind ul { flex: 1; margin: 0; padding: 0; list-style: none; display: flex; flex-direction: column; }
.behind li { flex: 1; padding-left: 2px; display: flex; align-items: center; }
.behind .sel { background: #1390ff; color: #103a70; }
.cad { height: 18px; width: 19px; font-size: 8px; line-height: 10px; padding-left: 1px; background: #ffffd8; }
.art { align-self: flex-end; }

.window { position: absolute; inset: 4px 27px 0 27px; border: 1px solid #a5aaa0; background: #f7fbf2; display: flex; flex-direction: column; padding: 0 1px; font-family: "Liberation Sans", Arial, sans-serif; font-size: 9px; font-weight: bold; color: #1b1b87; }
.wtitle { height: 22px; margin: 0 -1px; padding: 0 0 2px 5px; background: #fffffa; display: flex; align-items: center; gap: 4px; color: #222; font-family: Roboto, "Noto Sans", sans-serif; font-weight: normal; }
.child button { width: 33px; }
.panel { border: 1px solid #b4b8ae; }
.code { padding-top: 2px; height: 22px; margin-bottom: 1px; }
.form { padding: 2px 0 3px; height: 273px; }
.row { display: grid; height: 16px; align-items: center; }
label, legend { font-size: 10px; white-space: nowrap; }
.row label { text-align: right; padding-right: 4px; line-height: 14px; }
.row input:not([type]), .combo select { width: 100%; height: 16px; padding: 0 1px 1px 1px; border: 1px solid #e6e8df; border-top-color: #7c8077; border-left-color: #7c8077; background: #fffffa; box-shadow: inset 1px 1px 0 #b3b6ac; outline: 0; }
.row input.cream { background: #fff9e6; }
.row input.num { text-align: right; padding-right: 3px; }
.row input.dim { color: #777; font-weight: normal; }
input::selection { background: #0878d8; color: #fff; }
.combo { display: grid; }
.combo select { grid-area: 1 / 1; appearance: none; border-right-color: #7c8077; }
.combo i { grid-area: 1 / 1; justify-self: end; align-self: end; width: 12px; height: 14px; background: #f7fbf2; border: 1px solid #efefe8; border-right-color: #7c8077; border-bottom-color: #7c8077; display: flex; align-items: center; justify-content: center; pointer-events: none; }
.combo i::after { content: ""; border: 3px solid transparent; border-top-color: #000; border-bottom: 0; }
.combo.mini select { font-size: 8px; padding: 0 0 2px; }
.toprows { display: grid; grid-template-rows: 19px 20px 20px 19px 18px 19px 17px; }
.r-codigo { grid-template-columns: 109px 49px; }
.r-nome { grid-template-columns: 74px 250px 92px 162px; }
.r-endereco { grid-template-columns: 74px 446px 18px 41px; }
.r-complemento { grid-template-columns: 74px 505px; }
.r-complemento label { padding-right: 2px; }
.r-log { grid-template-columns: 74px 92px 26px 31px 29px 53px 35px 239px; }
.r-cidade { grid-template-columns: 70px 250px 34px 214px; column-gap: 4px; }
.r-cidade label { padding-right: 0; }
.r-fone { grid-template-columns: 74px 72px 31px 72px 66px 87px 89px 88px; }
.r-endereco label + input + label { padding-right: 2px; }
.r-nome label:nth-of-type(2), .r-log label:nth-of-type(n+2) { padding-right: 2px; }
.middle { display: flex; height: 59px; }
.midrows { width: 365px; padding-top: 3px; display: grid; grid-template-rows: 19px 20px 17px; }
.r-pais { grid-template-columns: 74px 241px; }
.r-suframa { grid-template-columns: 74px 100px; }
.r-ind { grid-template-columns: 74px 135px; }
.pessoa, .atuacao { display: flex; flex-direction: column; }
.pessoa { width: 81px; padding: 4px 0 0 6px; gap: 8px; }
.pessoa label { height: 14px; }
.atuacao { width: 123px; margin-left: 9px; padding-left: 6px; }
.pessoa label, .atuacao label { display: flex; align-items: center; gap: 4px; }
.atuacao label { height: 12px; }
.middle legend { height: 10px; line-height: 10px; padding: 0; margin-left: -1px; }
input[type="checkbox"], input[type="radio"] { appearance: none; width: 9px; height: 9px; border: 1px solid #e0e3da; border-top-color: #666; border-left-color: #666; background: #fffffa; display: grid; place-items: center; }
input[type="radio"] { border-radius: 50%; }
input[type="radio"]:checked::after { content: ""; width: 3px; height: 3px; background: #111; border-radius: 50%; }
input[type="checkbox"]:checked::after { content: ""; width: 5px; height: 3px; border-left: 2px solid #111; border-bottom: 2px solid #111; transform: rotate(-45deg); margin-bottom: 2px; }
.plano { margin-left: 4px; width: 574px; height: 53px; }
.plano legend { font-size: 8px; line-height: 10px; padding: 0; margin-left: 6px; }
.r-plano { grid-template-columns: 70px 219px 244px 30px; height: 18px; margin: 1px 0 3px; }
.r-plano label { padding-right: 2px; }
.r-plano output { margin: 0 1px 0 2px; height: 17px; line-height: 16px; background: #0ff; border: 1px solid #bfe9e4; color: #14335c; font-size: 9px; white-space: nowrap; }
.r-plano button { height: 17px; margin-left: 1px; border: 1px solid #e5e7de; border-right-color: #7c8077; border-bottom-color: #7c8077; }
.r-obs { grid-template-columns: 74px 499px; margin-top: 5px; }
.r-obs label { padding-right: 1px; }

.detail { flex: 1; display: flex; flex-direction: column; margin-top: 1px; border-right: 2px solid #7d8178; border-bottom: 2px solid #7d8178; }
.tabs { display: flex; align-items: flex-end; height: 17px; color: #111; font-size: 10px; }
.tabs button { height: 14px; padding: 0 3px; border-right: 2px solid #9b9f95; }
.tabs .active { height: 17px; padding: 0 2px 2px 5px; }
.tabpage { flex: 1; border-top: 1px solid #e6eadf; padding-top: 8px; display: grid; grid-template-rows: 22px 22px 19px 12px; }
.r-cnpj { grid-template-columns: 74px 131px 81px 129px 48px 116px; }
.r-contato { grid-template-columns: 74px 131px 81px 87px 71px 135px; }
.r-cobranca { grid-template-columns: 74px 288px; }
.r-isento { grid-template-columns: 74px 9px; height: 12px; }
.r-isento label { padding-right: 2px; }
.date { display: flex; align-items: center; height: 16px; border: 1px solid #7c8077; background: #fffffa; box-shadow: inset 1px 1px 0 #b3b6ac; }
.row .date input:not([type]) { flex: 1; height: 13px; border: 0; box-shadow: none; padding: 0 0 0 4px; background: none; white-space: pre; }
.date button { width: 12px; height: 10px; margin: 1px 1px 0; border: 1px solid #777; font-size: 8px; color: #222; }

.control { height: 59px; margin: 2px 0 0 -1px; padding-top: 5px; display: flex; gap: 4px; }
.control legend { color: #d51b2b; font-size: 10px; line-height: 10px; font-style: italic; font-weight: normal; padding: 0; margin-left: 3px; }
.control button { width: 77px; height: 34px; gap: 3px; border: 3px solid #512a5e; border-radius: 24px / 17px; background: linear-gradient(#ffe9dc 0, #f3d3cd 30%, #b795ac 38%, #47739a 46%, #2d81aa 62%, #359fc6 100%); font-size: 10px; color: #18237c; text-shadow: 1px 1px 0 #b9cbe8; }
.wstatus { height: 17px; margin-top: 1px; border-top: 1px solid #a9ada3; display: flex; align-items: stretch; font-weight: normal; font-size: 10px; }
.wstatus > * { display: flex; align-items: center; justify-content: center; border-left: 1px solid #b4b8ae; }
.ico { width: 13px; }
.logi { width: 44px; }
.ico2 { width: 15px; }
.user { width: 81px; }
.ico3 { width: 14px; }
.wstatus b { padding-left: 3px; font-size: 8px; }
.activate { position: absolute; right: 13px; bottom: 9px; color: #a9ada6; font-family: "Open Sans", "Noto Sans", sans-serif; font-weight: normal; pointer-events: none; width: 221px; }
.activate p { margin: 0; font-size: 14px; line-height: 16px; }
.activate small { display: block; font-family: Roboto, "Noto Sans", sans-serif; font-size: 11px; line-height: 16px; white-space: nowrap; }

.appstatus { height: 19px; display: flex; align-items: center; gap: 4px; padding: 0 4px 0 3px; }
.sep { height: 11px; border-left: 1px solid #ccc; }
.perfil { margin-left: auto; }

.rtask { height: 29px; background: #4a1b22; display: flex; }
.rtask > button { width: 36px; }
.rtask > button:nth-child(-n+4) { width: 35px; }
.rtask .word { margin-left: 3px; }
.run { background: linear-gradient(#76b9ed, #76b9ed) center bottom / 30px 2px no-repeat; }
.rtask .current { background-color: #715457; background-size: 100% 2px; }
.rtray { margin-left: auto; display: flex; align-items: center; gap: 5px; color: #fff; padding-right: 8px; border-right: 1px solid #80595e; margin-right: 3px; }
.clock, .lang { display: flex; flex-direction: column; align-items: center; }
.rtray .clock { font-size: 9px; line-height: 13px; }
.note { margin-left: 6px; }

.task { height: 40px; background: #272423; display: flex; color: #fff; }
.task > button { width: 49px; }
.task .start { width: 48px; margin-right: 2px; }
.task .run { background-size: 40px 2px; }
.task .current { background-color: #5b5958; background-size: 100% 2px; width: 46px; }
.tray { margin-left: auto; display: flex; align-items: center; gap: 6px; font-size: 11px; line-height: 17px; padding-right: 19px; margin-right: 4px; border-right: 1px solid #555; }
.tray .lang { margin-left: 3px; }
.tray .clock { margin-left: 4px; }
.bell { margin-left: 12px; }
</style>
